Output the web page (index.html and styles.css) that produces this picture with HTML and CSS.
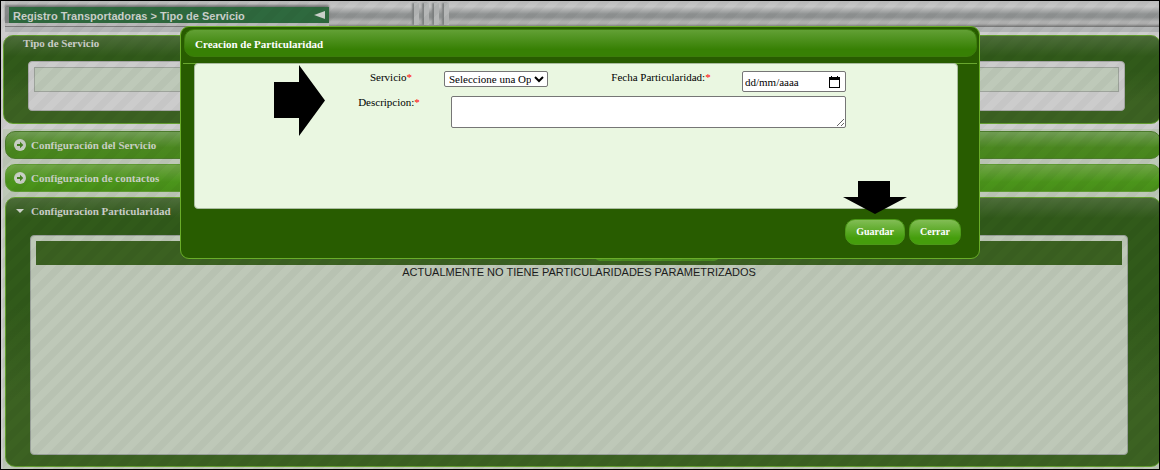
FILE: index.html
```html
<!DOCTYPE html>
<html lang="es">
<head>
<meta charset="utf-8">
<title>Tipo de Servicio</title>
<link rel="stylesheet" href="styles.css">
</head>
<body>
<div class="page">
  <header class="topbar">
    <div class="breadcrumb">
      <span>Registro Transportadoras &gt; Tipo de Servicio</span>
      <svg class="collapse" viewBox="0 0 11 8" aria-hidden="true"><path d="M0 4 11 0V8Z" fill="#c9cfc9"/></svg>
    </div>
    <div class="grip" aria-hidden="true"><i></i><i></i><i></i><i></i></div>
  </header>
  <section class="panel service">
    <h2 class="panel-title">Tipo de Servicio</h2>
    <div class="service-box"><div class="service-strip"></div></div>
  </section>
  <main class="accordion">
    <button class="bar bar-dim" type="button">
      <svg class="icon" viewBox="0 0 12 12" aria-hidden="true"><circle cx="6" cy="6" r="6" fill="#c9cfc5"/><path d="M3 5H6V2.700L9.300 6 6 9.300V7H3Z" fill="#44811e"/></svg>
      Configuración del Servicio
    </button>
    <button class="bar" type="button">
      <svg class="icon" viewBox="0 0 12 12" aria-hidden="true"><circle cx="6" cy="6" r="6" fill="#c9cfc5"/><path d="M3 5H6V2.700L9.300 6 6 9.300V7H3Z" fill="#44811e"/></svg>
      Configuracion de contactos
    </button>
    <section class="panel detail">
      <h2 class="detail-title">
        <svg class="icon" viewBox="0 0 12 12" aria-hidden="true"><path d="M2 4H10L6 8Z" fill="#d0d5cc"/></svg>
        Configuracion Particularidad
      </h2>
      <div class="detail-box">
        <div class="detail-head"><span class="tab-edge"></span></div>
        <p class="empty">ACTUALMENTE NO TIENE PARTICULARIDADES PARAMETRIZADOS</p>
      </div>
    </section>
  </main>
  <div class="overlay"></div>
  <div class="dialog" role="dialog" aria-labelledby="dialog-title">
    <h1 class="dialog-title" id="dialog-title">Creacion de Particularidad</h1>
    <form class="dialog-frame">
      <div class="dialog-content">
        <div class="row">
          <label class="label-service" for="servicio">Servicio<b>*</b></label>
          <select class="field select" id="servicio"><option>Seleccione una Opcion</option></select>
          <label class="label-date" for="fecha">Fecha Particularidad:<b>*</b></label>
          <div class="field date">
            <input class="date-input" id="fecha" type="text" value="dd/mm/aaaa">
            <button class="date-button" type="button" aria-label="Abrir calendario">
              <svg viewBox="0 0 11 12" aria-hidden="true"><path d="M0 1H2V0H3V1H8V0H9V1H11V12H0ZM1 4V11H10V4Z" fill="#000" fill-rule="evenodd"/></svg>
            </button>
          </div>
        </div>
        <div class="row">
          <label class="label-description" for="descripcion">Descripcion:<b>*</b></label>
          <textarea class="field description" id="descripcion"></textarea>
        </div>
      </div>
      <div class="actions">
        <button class="action" type="button">Guardar</button>
        <button class="action" type="button">Cerrar</button>
      </div>
    </form>
    <svg class="arrow-right" viewBox="0 0 51 71" aria-hidden="true"><path d="M0 17H25V0L51 35.500 25 71V53H0Z"/></svg>
    <svg class="arrow-down" viewBox="0 0 64 33" aria-hidden="true"><path d="M15 0H47V16H64L32 33 0 16H15Z"/></svg>
  </div>
</div>
</body>
</html>
```
FILE: styles.css
```css
* {
  box-sizing: border-box;
}

body {
  margin: 0;
  font-family: "Liberation Serif", "Times New Roman", serif;
  font-size: 11px;
  line-height: 12px;
}

button,
input,
select,
textarea {
  font: inherit;
}

h1,
h2,
p {
  margin: 0;
}

.page {
  position: relative;
  display: flex;
  flex-direction: column;
  min-height: 100vh;
  border: 1px solid #000;
  background: #cdcdcd;
  overflow: hidden;
}

.topbar {
  display: flex;
  height: 26px;
  margin-left: 4px;
  background: linear-gradient(#bcbcbc, #c6c6c6 22%, #919494 50%, #8f9292 62%, #b5b5b5 80%, #b0b0b0 88%, #707070);
  box-shadow: 0 5px 0 #b4b6b7;
}

.breadcrumb {
  display: flex;
  justify-content: space-between;
  width: 324px;
  height: 16px;
  margin-top: 6px;
  padding: 0 4px 0 4px;
  border-left: 4px solid #858888;
  background: #2e693e;
  box-shadow: 0 -2px 2px #777, 0 3px 0 #b9b9b9;
  color: #cbd0cb;
  font: bold 11px/18px "Liberation Sans", Arial, sans-serif;
}

.collapse {
  width: 11px;
  height: 8px;
  margin-top: 4px;
}

.grip {
  display: flex;
  gap: 5px;
  margin: 2px 0 2px 85px;
}

.grip i {
  width: 5px;
  background: #b5b7b7;
  box-shadow: -2px 0 2px #7f8282;
}

.panel {
  border: 1px solid #639f2f;
  border-radius: 10px;
  background: linear-gradient(#4d6d3a, #315a1a 20px, #315a1a 40%, #3c6222 75%);
}

.panel-title,
.detail-title {
  color: #cbcec9;
  font-size: 11px;
  line-height: 14px;
}

.service {
  height: 89px;
  margin: 8px -2px 0 2px;
  padding: 0 35px 0 24px;
}

.panel-title {
  margin-left: -5px;
}

.service-box {
  height: 50px;
  margin-top: 11px;
  padding: 5px;
  border: 1px solid #a8a8a8;
  border-radius: 4px;
  background: #cccccc;
}

.service-strip {
  height: 25px;
  border: 1px solid #9da39b;
  background: #bec9b9;
}

.accordion {
  display: flex;
  flex: 1;
  flex-direction: column;
  gap: 5px;
  margin: 5px -2px 0 2px;
  padding: 2px 0 2px 2px;
  background: #bec8b8;
}

.bar {
  display: flex;
  align-items: center;
  gap: 5px;
  height: 28px;
  padding: 0 8px;
  border: 1px solid #5f9a34;
  border-radius: 10px;
  background: linear-gradient(#6fa446, #4b951b 65%, #488f19);
  color: #cbd1c6;
  font-weight: bold;
}

.bar-dim {
  border-color: #4c7b2b;
  background: linear-gradient(#73a056, #4b8820 60%, #48871c);
}

.icon {
  width: 12px;
  height: 12px;
}

.detail {
  display: flex;
  flex: 1;
  flex-direction: column;
  padding: 6px 32px 11px 24px;
}

.detail-title {
  display: flex;
  align-items: center;
  gap: 5px;
  margin-left: -16px;
}

.detail-box {
  flex: 1;
  margin-top: 17px;
  padding: 5px;
  border: 1px solid #989f99;
  border-radius: 4px;
  background: #bec8b8;
}

.detail-head {
  display: flex;
  align-items: flex-end;
  justify-content: center;
  height: 24px;
  padding: 0 0 4px 156px;
  background: #3b6121;
}

.tab-edge {
  width: 124px;
  height: 5px;
  border-radius: 0 0 8px 8px;
  background: #4a8d20;
}

.empty {
  color: #1c1c1c;
  font: 11px/15px "Liberation Sans", Arial, sans-serif;
  text-align: center;
}

.overlay {
  position: absolute;
  inset: 0;
  background: linear-gradient(135deg, rgba(0, 0, 0, 0.03) 25%, transparent 25% 50%, rgba(0, 0, 0, 0.03) 50% 75%, transparent 75%) 0 0 / 20px 20px;
  pointer-events: none;
}

.dialog {
  position: absolute;
  top: 25px;
  left: 50%;
  width: 800px;
  padding: 2px;
  border: 1px solid #6aad29;
  border-radius: 9px;
  background: #285c00;
  transform: translateX(-50%);
}

.dialog-title {
  height: 28px;
  margin-left: 1px;
  padding-left: 10px;
  border: 1px solid #3c7c0b;
  border-radius: 10px;
  background: linear-gradient(#62a035, #378004 75%);
  color: #fff;
  font-size: 11px;
  line-height: 28px;
}

.dialog-frame {
  margin-top: 6px;
  padding: 0 19px 11px 11px;
  border-top: 1px solid #69a72e;
}

.dialog-content {
  height: 146px;
  margin-top: -1px;
  padding: 7px 0 0 148px;
  border: 1px solid #aabca0;
  border-radius: 4px;
  background: #eaf7e1;
  color: #000;
}

.row {
  display: flex;
  align-items: flex-start;
  margin-bottom: 4px;
  text-align: center;
}

.row b {
  color: #f00;
  font-weight: normal;
}

.label-service {
  width: 96px;
}

.label-date {
  width: 162px;
  margin-left: 32px;
}

.label-description {
  width: 92px;
}

.field {
  border: 1px solid #767676;
  border-radius: 2px;
  background: #fff;
}

.select {
  width: 104px;
  height: 16px;
  margin-left: 5px;
  padding: 0;
}

.date {
  display: flex;
  align-items: center;
  width: 104px;
  height: 21px;
}

.date-input {
  width: 58px;
  padding: 0 0 0 2px;
  border: 0;
  background: transparent;
}

.date-button {
  display: flex;
  margin-left: 28px;
  padding: 0;
  border: 0;
  background: transparent;
}

.date-button svg {
  width: 11px;
  height: 12px;
}

.description {
  width: 395px;
  height: 32px;
  margin-left: 16px;
}

.actions {
  display: flex;
  justify-content: flex-end;
  gap: 4px;
  margin: 10px -3px 0 0;
}

.action {
  height: 26px;
  padding: 0 10px;
  border: 1px solid #4c9a18;
  border-radius: 10px;
  background: linear-gradient(#82bd55, #459e0c 75%);
  color: #fff;
  font-size: 10px;
  font-weight: bold;
}

.arrow-right,
.arrow-down {
  position: absolute;
}

.arrow-right {
  top: 38px;
  left: 93px;
  width: 51px;
  height: 71px;
}

.arrow-down {
  top: 154px;
  left: 662px;
  width: 64px;
  height: 33px;
}
```
